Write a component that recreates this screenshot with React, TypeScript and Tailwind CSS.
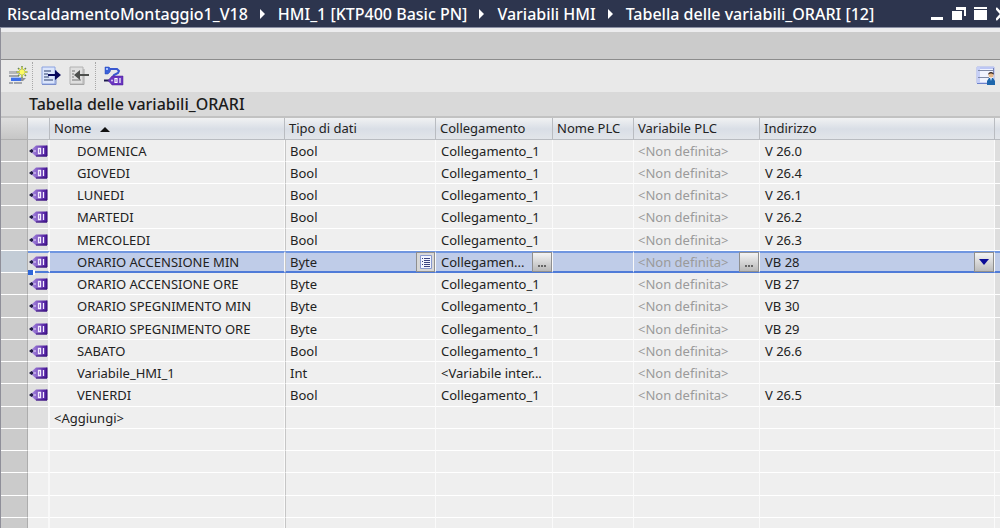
import { clsx } from "clsx";

type Variable = {
  name: string;
  type: string;
  connection: string;
  address: string;
};

const variables: Variable[] = [
  { name: "DOMENICA", type: "Bool", connection: "Collegamento_1", address: "V 26.0" },
  { name: "GIOVEDI", type: "Bool", connection: "Collegamento_1", address: "V 26.4" },
  { name: "LUNEDI", type: "Bool", connection: "Collegamento_1", address: "V 26.1" },
  { name: "MARTEDI", type: "Bool", connection: "Collegamento_1", address: "V 26.2" },
  { name: "MERCOLEDI", type: "Bool", connection: "Collegamento_1", address: "V 26.3" },
  { name: "ORARIO ACCENSIONE MIN", type: "Byte", connection: "Collegamen...", address: "VB 28" },
  { name: "ORARIO ACCENSIONE ORE", type: "Byte", connection: "Collegamento_1", address: "VB 27" },
  { name: "ORARIO SPEGNIMENTO MIN", type: "Byte", connection: "Collegamento_1", address: "VB 30" },
  { name: "ORARIO SPEGNIMENTO ORE", type: "Byte", connection: "Collegamento_1", address: "VB 29" },
  { name: "SABATO", type: "Bool", connection: "Collegamento_1", address: "V 26.6" },
  { name: "Variabile_HMI_1", type: "Int", connection: "<Variabile inter...", address: "" },
  { name: "VENERDI", type: "Bool", connection: "Collegamento_1", address: "V 26.5" },
];

const selectedName = "ORARIO ACCENSIONE MIN";

const breadcrumbs = [
  "RiscaldamentoMontaggio1_V18",
  "HMI_1 [KTP400 Basic PN]",
  "Variabili HMI",
  "Tabella delle variabili_ORARI [12]",
];

const AddIcon = () => (
  <svg width="20" height="20" viewBox="0 0 20 20">
    <path d="M1 5h11v3H1z" fill="#b4b6ba" />
    <path d="M1 9h10v2H1z" fill="#9fa2a8" />
    <path d="M3 12h10v3H3z" fill="#3f6fe8" />
    <path d="M3 11h10v1H3z" fill="#a9c2f5" />
    <path d="M13 12h5l-3 3h-2z" fill="#8f9298" />
    <path d="M1 16h4v2H1zM6 16h8v2H6z" fill="#a4a7ac" />
    <path d="M14 0v12M8.500 6h11M10 2l8 8M18 2l-8 8" stroke="#6f8a52" strokeWidth="1.500" />
    <path d="M14 1v10M9 6h10M11 3l6 6M17 3l-6 6" stroke="#f4f23c" strokeWidth="1" />
    <circle cx="14" cy="6" r="2.500" fill="#fdfb62" />
  </svg>
);

const ExportIcon = () => (
  <svg width="20" height="20" viewBox="0 0 20 20">
    <path d="M1 1h13v17H1z" fill="#dbe5fb" stroke="#8ba2e0" />
    <path d="M1 18.500h14V4" fill="none" stroke="#7b8fcb" />
    <path d="M3 5h7M3 8h4M3 11h5M3 14h9" stroke="#67759c" strokeWidth="1.500" />
    <path d="M7 8h7V4l6 5-6 5v-4H7z" fill="#08085c" />
  </svg>
);

const ImportIcon = () => (
  <svg width="20" height="20" viewBox="0 0 20 20">
    <path d="M1 1h13v17H1z" fill="#dfdfdf" stroke="#b2b2b2" />
    <path d="M1 18.500h14V3" fill="none" stroke="#a5a5a5" />
    <path d="M3 5h3M3 8h2M3 11h2M3 14h9" stroke="#999" strokeWidth="1.500" />
    <path d="M20 8h-9V4L5 9l6 5v-4h9z" fill="#4d4f4d" />
  </svg>
);

const ConnectIcon = () => (
  <svg width="20" height="20" viewBox="0 0 20 20">
    <path d="M1 1h4l2 2-1 3-2 2H1z" fill="#3b62d9" stroke="#2647b8" strokeWidth="0.500" />
    <path d="M2 2h2v2H2z" fill="#a9c0ff" />
    <path d="M6 3h7l2 2-1 2-4 2-1 2" fill="none" stroke="#3a58d0" strokeWidth="2" />
    <path d="M0 14.500h5" stroke="#1c1a4e" strokeWidth="2" />
    <path d="M4 14.500L8 10h11v9H8z" fill="#6a35c0" stroke="#4a1d96" strokeWidth="0.500" />
    <path d="M11 12.500h2v4h-2zM16 12v5" fill="none" stroke="#fff" strokeWidth="1.200" />
    <circle cx="8" cy="14.500" r="1" fill="#dccbf7" />
  </svg>
);

const TagIcon = () => (
  <svg width="20" height="14" viewBox="0 0 20 14" className="block">
    <defs>
      <linearGradient id="tag" x1="0" y1="0" x2="1" y2="0">
        <stop offset="0" stopColor="#a98be0" />
        <stop offset="1" stopColor="#47149a" />
      </linearGradient>
    </defs>
    <path d="M8 1.500h11v11H8L3.500 8.500v-3z" fill="url(#tag)" />
    <path d="M8 12h11V1.500" fill="none" stroke="#361078" />
    <path d="M1 7l2.500-2L6 7 3.500 9z" fill="#1e1944" />
    <path d="M5 7h3" stroke="#e8dcff" strokeWidth="1" />
    <path d="M10.500 4.500h2v5h-2zM15.500 4v6" fill="none" stroke="#f3ecff" strokeWidth="1.300" />
  </svg>
);

const UserTableIcon = () => (
  <svg width="20" height="20" viewBox="0 0 20 20">
    <path d="M1 1h17v16H1z" fill="#f0f3ff" stroke="#a9b4ec" />
    <path d="M1 1h17v2H1z" fill="#bcc6f4" />
    <path d="M1 1h3v16H1z" fill="#c6cff6" />
    <path d="M2 4.500h15M2 11.500h11" stroke="#7f89a6" />
    <path d="M1 17.500h12" stroke="#6d82cc" />
    <path d="M17.500 2v6" stroke="#7784b5" />
    <path d="M11 19v-4l2-3h4l2 3v4z" fill="#1d66ac" />
    <path d="M14 12h2l-1 3z" fill="#dbeafa" />
    <circle cx="15" cy="9" r="2.500" fill="#e6b98a" />
    <path d="M12 9c0-4 6-4 6 0-1-2-5-2-6 0z" fill="#33231e" />
  </svg>
);

const EllipsisButton = ({ label }: { label: string }) => (
  <button
    aria-label={label}
    className="flex h-5 w-5 shrink-0 items-center justify-center border border-[#8f8f8f] bg-linear-to-b from-[#f4f4f4] to-[#b9b9b9]"
  >
    <svg width="12" height="14" viewBox="0 0 12 14">
      <path d="M2 10h2v2H2zM5 10h2v2H5zM8 10h2v2H8z" fill="#666" />
    </svg>
  </button>
);

const TitleBar = () => (
  <header className="flex h-7 items-center justify-between overflow-hidden border-b border-[#8b90a4] bg-[#2d354e] pl-[7px] text-white">
    <nav aria-label="Percorso" className="flex items-center whitespace-nowrap text-[16px] leading-6 font-medium">
      {breadcrumbs.map((item, i) => (
        <div key={item} className="flex items-center">
          {i > 0 && (
            <svg width="30" height="12" viewBox="0 0 30 12">
              <path d="M12 1l5 5-5 5z" fill="#fff" />
            </svg>
          )}
          <a href="#tabella">{item}</a>
        </div>
      ))}
    </nav>
    <div className="-mr-2.5 flex shrink-0 items-center gap-2">
      <button aria-label="Riduci a icona">
        <svg width="14" height="14" viewBox="0 0 14 14">
          <path d="M1 10h12v3H1z" fill="#fff" />
        </svg>
      </button>
      <button aria-label="Ripristina">
        <svg width="14" height="14" viewBox="0 0 14 14">
          <path d="M4 0h10v9h-2V3H4z" fill="#fff" />
          <path d="M0 4h10v9H0z" fill="#fff" />
        </svg>
      </button>
      <button aria-label="Ingrandisci">
        <svg width="14" height="14" viewBox="0 0 14 14">
          <path d="M0 0h13v2H0zM0 3h13v10H0z" fill="#fff" />
        </svg>
      </button>
      <button aria-label="Chiudi">
        <svg width="14" height="14" viewBox="0 0 14 14">
          <path d="M0 1l11 12M11 1L0 13" stroke="#fff" strokeWidth="2.500" />
        </svg>
      </button>
    </div>
  </header>
);

const Toolbar = () => (
  <div className="flex h-8 items-center justify-between bg-[#e9e9e9] pl-[7px] pr-1">
    <div className="flex items-center gap-1">
      <button aria-label="Aggiungi variabile"><AddIcon /></button>
      <div className="h-7 border-l border-dotted border-[#a8a8a8]" />
      <div className="flex items-center gap-2 pl-1 pr-0.5">
        <button aria-label="Esporta"><ExportIcon /></button>
        <button aria-label="Importa"><ImportIcon /></button>
      </div>
      <div className="h-7 border-l border-dotted border-[#a8a8a8]" />
      <button aria-label="Collega variabile" className="ml-1"><ConnectIcon /></button>
    </div>
    <button aria-label="Impostazioni tabella"><UserTableIcon /></button>
  </div>
);

const VariableRow = ({ item }: { item: Variable }) => {
  const selected = item.name === selectedName;
  const cell = clsx(
    "border-b border-r border-r-[#fafafa] p-0 pl-1",
    selected ? "border-t-2 border-b-2 border-t-[#7096e0] border-b-[#4f7bd8] bg-[#bfcce8]" : "border-b-white bg-[#efefef]"
  );

  return (
    <tr className="h-[22px] nth-[4n]:h-[23px]">
      <td className={clsx("border-b border-r border-b-white border-r-[#adadad] p-0", selected ? "bg-[#c3ccd6]" : "bg-[#cbcbcb]")} />
      <td
        className={clsx(
          "border-b border-r-2 border-r-[#f8f8f8] bg-[#e0e0e0] p-0",
          selected ? "relative z-10 border-t-2 border-b-2 border-t-[#7096e0] border-b-[#4f7bd8]" : "border-b-white"
        )}
      >
        <TagIcon />
        {selected && <div className="absolute -bottom-1 left-0 h-[5px] w-[7px] border-r-2 border-white bg-[#2f66d8]" />}
      </td>
      <td className={clsx(cell, "pl-[27px]")}>{item.name}</td>
      <td className={clsx(cell, "border-l border-l-[#c6c6c6]")}>
        <div className="flex items-center justify-between">
          {item.type}
          {selected && (
            <button aria-label="Scegli tipo di dati" className="-my-1 flex h-5 w-[19px] items-center justify-center border border-[#8f8f8f] bg-[#d8d8d8]">
              <svg width="14" height="16" viewBox="0 0 14 16">
                <path d="M1.500 1.500h11v13h-11z" fill="#f2f5ff" stroke="#8899cf" />
                <path d="M3 4.500h1M3 7.500h1M3 10.500h1M5 4.500h6M5 6.500h6M5 8.500h6M5 10.500h6M5 12.500h6" stroke="#3a4380" strokeWidth="1" />
              </svg>
            </button>
          )}
        </div>
      </td>
      <td className={clsx(cell, "pl-[5px]")}>
        <div className="-my-1 flex items-center justify-between">
          {item.connection}
          {selected && <EllipsisButton label="Scegli collegamento" />}
        </div>
      </td>
      <td className={cell} />
      <td className={cell}>
        <div className="-my-1 flex items-center justify-between text-[#9a9a9a]">
          {"<Non definita>"}
          {selected && <EllipsisButton label="Scegli variabile PLC" />}
        </div>
      </td>
      <td className={clsx(cell, "pl-[5px]")}>
        <div className="-my-1 flex items-center justify-between">
          {item.address}
          {selected && (
            <button aria-label="Apri indirizzo" className="flex h-5 w-5 items-center justify-center border border-[#8f8f8f] bg-linear-to-b from-[#f4f4f4] to-[#bdbdbd]">
              <svg width="12" height="8" viewBox="0 0 12 8">
                <path d="M1 1h10L6 7z" fill="#0b0b96" />
              </svg>
            </button>
          )}
        </div>
      </td>
      <td className={clsx("border-b p-0", selected ? "border-t-2 border-b-2 border-t-[#7096e0] border-b-[#4f7bd8] bg-[#bfcce8]" : "border-white bg-[#dedede]")} />
    </tr>
  );
};

const EmptyRow = ({ text }: { text?: string }) => {
  const cell = "border-b border-r border-b-white border-r-[#fafafa] bg-[#efefef] p-0 pl-1";

  return (
    <tr className="h-[22px] nth-[4n]:h-[23px]">
      <td className="border-b border-r border-b-white border-r-[#adadad] bg-[#cbcbcb] p-0" />
      <td className={clsx("border-b border-r-2 border-b-white border-r-[#f8f8f8] p-0", text ? "bg-[#e0e0e0]" : "bg-[#efefef]")} />
      <td className={cell}>{text}</td>
      <td className={clsx(cell, "border-l border-l-[#c6c6c6]")} />
      <td className={cell} />
      <td className={cell} />
      <td className={cell} />
      <td className={cell} />
      <td className="border-b border-white bg-[#efefef] p-0" />
    </tr>
  );
};

const VariableTable = () => {
  const head = "border-r border-[#b9bcc1] p-0 pb-0.5 pl-1 text-left font-normal";

  return (
    <table id="tabella" className="w-full table-fixed border-separate border-spacing-0 whitespace-nowrap text-[13px] leading-4 text-[#222]">
      <colgroup>
        <col className="w-[27px]" />
        <col className="w-[22px]" />
        <col className="w-[235px]" />
        <col className="w-[151px]" />
        <col className="w-[117px]" />
        <col className="w-[81px]" />
        <col className="w-[126px]" />
        <col />
        <col className="w-[5px]" />
      </colgroup>
      <thead>
        <tr className="h-[22px] bg-linear-to-b from-[#f1f2f3] via-[#d9dee6] to-[#e3e6ea] [&>th]:border-b">
          <th className="border-r border-[#b0b0b0] bg-linear-to-b from-[#dedede] to-[#c6c6c6] p-0" />
          <th className={head} />
          <th className={head} aria-sort="ascending">
            <button className="flex items-center gap-2">
              Nome
              <svg width="12" height="12" viewBox="0 0 12 12">
                <path d="M1 10h10L6 5z" fill="#111" />
              </svg>
            </button>
          </th>
          <th className={head}>Tipo di dati</th>
          <th className={head}>Collegamento</th>
          <th className={head}>Nome PLC</th>
          <th className={head}>Variabile PLC</th>
          <th className={head}>Indirizzo</th>
          <th className="border-[#b9bcc1] p-0" />
        </tr>
      </thead>
      <tbody>
        {variables.map((item) => (
          <VariableRow key={item.name} item={item} />
        ))}
        <EmptyRow text="<Aggiungi>" />
        {[1, 2, 3, 4, 5].map((n) => (
          <EmptyRow key={n} />
        ))}
      </tbody>
    </table>
  );
};

export default function App() {
  return (
    <div className="h-screen overflow-hidden bg-[#efefef] font-['Noto_Sans','Open_Sans',sans-serif]">
      <TitleBar />
      <main className="border-l border-[#8f8f99]">
        {/* Empty tab strip */}
        <div className="h-8 border-t-4 border-b border-t-[#ececee] border-b-[#8c8c8c] bg-[#cbcbcb]" />
        <Toolbar />
        <h1 className="h-[26px] border-b-2 border-[#c2c2c2] bg-[#d9d9d9] pl-7 text-[16px] leading-6 font-medium text-[#1c1c1c]">
          Tabella delle variabili_ORARI
        </h1>
        <VariableTable />
      </main>
    </div>
  );
}
